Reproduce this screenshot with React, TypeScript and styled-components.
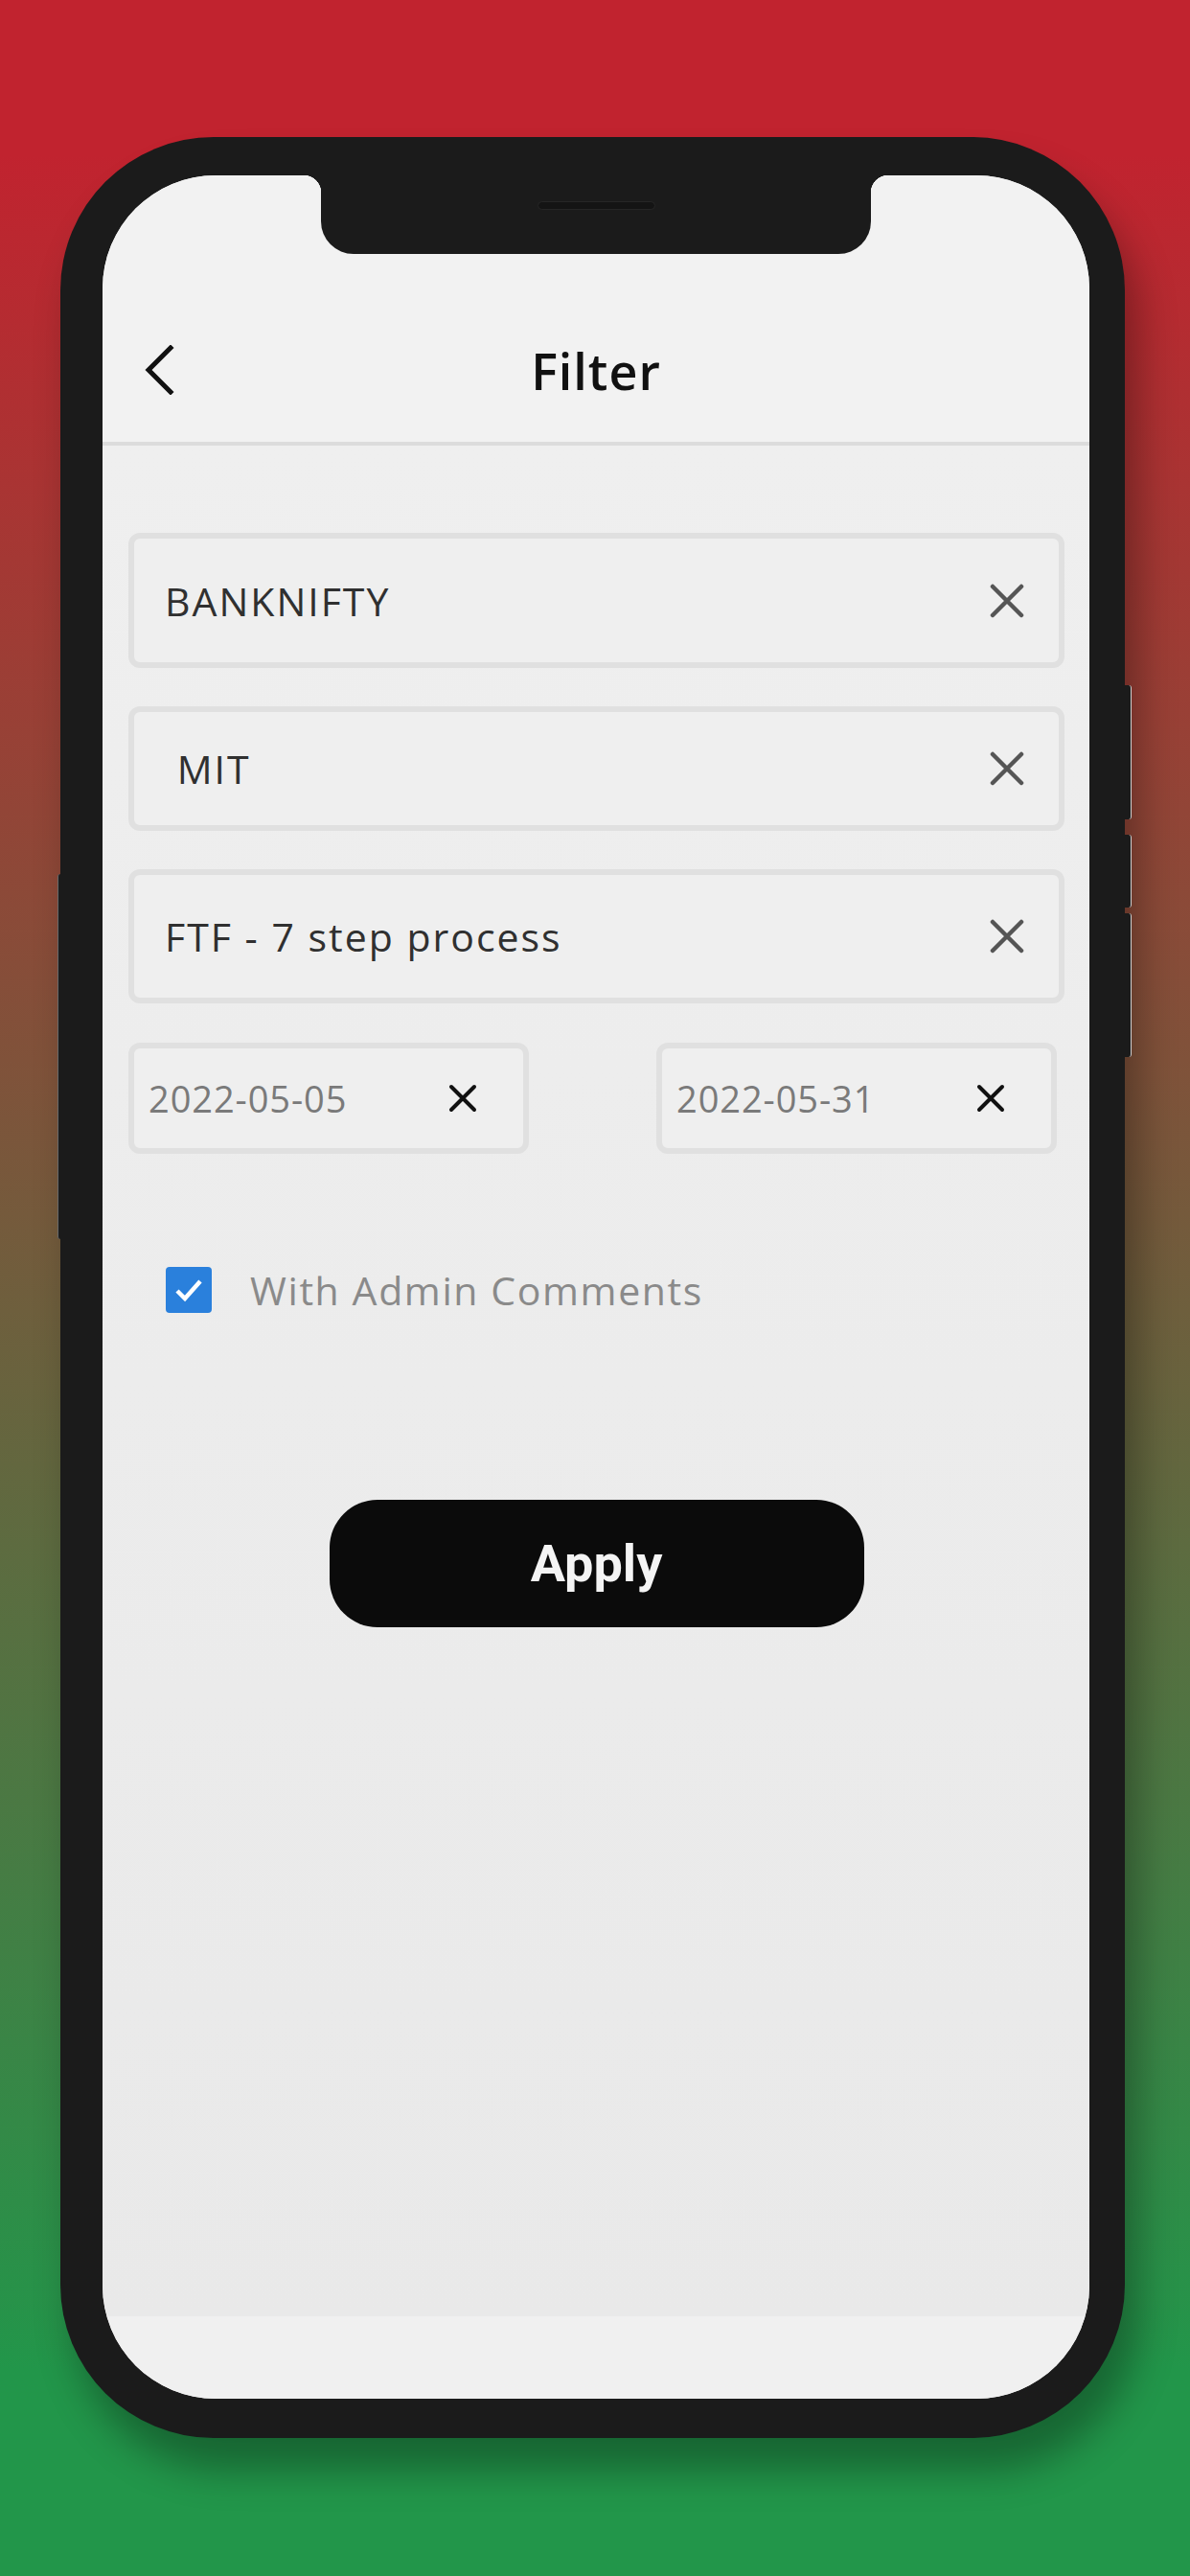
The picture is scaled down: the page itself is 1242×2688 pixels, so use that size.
import styled, { createGlobalStyle } from "styled-components";

const GlobalStyle = createGlobalStyle`
  html, body {
    margin: 0;
    padding: 0;
  }
  body {
    font-family: "Open Sans", "DejaVu Sans", sans-serif;
  }
  * {
    box-sizing: border-box;
  }
`;

const Backdrop = styled.div`
  width: 1242px;
  height: 2688px;
  padding: 143px 0 0 63px;
  background: linear-gradient(
    180deg,
    #c1232f 0%,
    #c1232f 6%,
    #22964a 92%,
    #22964a 100%
  );
`;

const Phone = styled.div`
  position: relative;
  width: 1111px;
  height: 2401px;
  padding: 40px 37px 41px 44px;
  border-radius: 160px;
  background: #1b1b1b;
  box-shadow: 14px 34px 40px rgba(0, 0, 0, 0.32);
`;

const SideKey = styled.div<{ $side: "left" | "right"; $top: number; $len: number }>`
  position: absolute;
  top: ${(p) => p.$top}px;
  height: ${(p) => p.$len}px;
  width: 8px;
  background: #1b1b1b;
  ${(p) =>
    p.$side === "right"
      ? "right: -7px; border-right: 1px solid #cfcfcf; border-radius: 0 3px 3px 0;"
      : "left: -3px; border-left: 1px solid #6a6a6a; border-radius: 3px 0 0 3px;"}
`;

const Screen = styled.div`
  width: 1030px;
  height: 2320px;
  border-radius: 118px;
  overflow: hidden;
  display: flex;
  flex-direction: column;
  background: #efefef;
`;

const Header = styled.header`
  display: flex;
  flex-direction: column;
  background: #f2f2f2;
  border-bottom: 4px solid #dcdcdc;
`;

const Notch = styled.div`
  position: relative;
  align-self: center;
  width: 574px;
  height: 82px;
  padding-top: 27px;
  display: flex;
  justify-content: center;
  background: #1b1b1b;
  border-radius: 0 0 34px 34px;

  &::before,
  &::after {
    content: "";
    position: absolute;
    top: 0;
    width: 18px;
    height: 18px;
  }
  &::before {
    left: -18px;
    background: radial-gradient(circle at 0 100%, transparent 18px, #1b1b1b 18.5px);
  }
  &::after {
    right: -18px;
    background: radial-gradient(circle at 100% 100%, transparent 18px, #1b1b1b 18.5px);
  }
`;

const Speaker = styled.div`
  width: 123px;
  height: 9px;
  border-radius: 5px;
  background: #141414;
  border: 1px solid #262626;
`;

const HeaderRow = styled.div`
  height: 196px;
  padding-top: 46px;
  display: grid;
  grid-template-columns: 1fr auto 1fr;
  align-items: center;
`;

const BackButton = styled.button`
  justify-self: start;
  display: flex;
  margin-left: 43px;
  padding: 0;
  border: none;
  background: none;
`;

const Title = styled.h1`
  margin: 0;
  font-size: 52px;
  font-weight: 600;
  color: #111;
  letter-spacing: 1px;
`;

const Content = styled.main`
  flex: 1;
  display: flex;
  flex-direction: column;
  padding: 91px 26px 0 27px;
  background: linear-gradient(180deg, #efefef 0%, #e9e9e9 100%);
`;

const FieldStack = styled.div`
  display: flex;
  flex-direction: column;
  gap: 40px;
`;

const Field = styled.div<{ $h: number }>`
  height: ${(p) => p.$h}px;
  display: flex;
  align-items: center;
  justify-content: space-between;
  padding: 0 36px 0 32px;
  border: 6px solid #e0e0e0;
  border-radius: 12px;
  background: #efefef;
`;

const FieldText = styled.span`
  font-size: 41px;
  color: #303030;
  white-space: pre;
  letter-spacing: 2px;
`;

const DateRow = styled.div`
  display: flex;
  justify-content: space-between;
  padding-right: 8px;
  margin-top: 41px;
`;

const DateBox = styled.div`
  width: 418px;
  height: 116px;
  display: flex;
  align-items: center;
  justify-content: space-between;
  padding: 0 48px 0 15px;
  border: 6px solid #e0e0e0;
  border-radius: 12px;
  background: #efefef;
`;

const DateText = styled.span`
  font-size: 38px;
  color: #7a7a7a;
  letter-spacing: 0.9px;
`;

const CheckRow = styled.label`
  height: 48px;
  display: flex;
  align-items: center;
  gap: 40px;
  margin-top: 118px;
  padding-left: 39px;
`;

const CheckBox = styled.span`
  width: 48px;
  height: 48px;
  display: flex;
  align-items: center;
  justify-content: center;
  border-radius: 4px;
  background: #2a80dc;
`;

const CheckLabel = styled.span`
  font-size: 41px;
  line-height: 1;
  color: #8a8a8a;
  letter-spacing: 1.6px;
`;

const ApplyButton = styled.button`
  align-self: center;
  margin-top: 195px;
  width: 558px;
  height: 133px;
  border: none;
  border-radius: 50px;
  background: #0b0b0b;
  color: #f4f4f4;
  font-family: Roboto, "Liberation Sans", sans-serif;
  font-weight: 700;
  font-size: 54px;
`;

const BottomBar = styled.div`
  height: 86px;
  background: #f0f0f0;
`;

function ClearIcon({ size, color, width }: { size: number; color: string; width: number }) {
  const e = size - 3;
  return (
    <svg width={size} height={size} viewBox={`0 0 ${size} ${size}`}>
      <path
        d={`M3 3 L${e} ${e} M${e} 3 L3 ${e}`}
        stroke={color}
        strokeWidth={width}
        strokeLinecap="round"
        fill="none"
      />
    </svg>
  );
}

const fields = [
  { text: "BANKNIFTY", h: 141 },
  { text: " MIT", h: 130 },
  { text: "FTF - 7 step process", h: 140 },
];

export default function App() {
  return (
    <>
      <GlobalStyle />
      <Backdrop>
        <Phone>
          <SideKey $side="right" $top={572} $len={140} />
          <SideKey $side="right" $top={728} $len={76} />
          <SideKey $side="right" $top={810} $len={150} />
          <SideKey $side="left" $top={769} $len={381} />
          <Screen>
            <Header>
              <Notch>
                <Speaker />
              </Notch>
              <HeaderRow>
                <BackButton aria-label="Back">
                  <svg width="32" height="52" viewBox="0 0 32 52">
                    <path
                      d="M28 3 L5 26 L28 49"
                      stroke="#111"
                      strokeWidth="5"
                      fill="none"
                      strokeLinecap="square"
                    />
                  </svg>
                </BackButton>
                <Title>Filter</Title>
                <span />
              </HeaderRow>
            </Header>
            <Content>
              <FieldStack>
                {fields.map((f) => (
                  <Field key={f.text} $h={f.h}>
                    <FieldText>{f.text}</FieldText>
                    <ClearIcon size={36} color="#555" width={4.5} />
                  </Field>
                ))}
              </FieldStack>
              <DateRow>
                <DateBox>
                  <DateText>2022-05-05</DateText>
                  <ClearIcon size={30} color="#111" width={4} />
                </DateBox>
                <DateBox>
                  <DateText>2022-05-31</DateText>
                  <ClearIcon size={30} color="#111" width={4} />
                </DateBox>
              </DateRow>
              <CheckRow>
                <CheckBox>
                  <svg width="34" height="34" viewBox="0 0 34 34">
                    <path
                      d="M5 18 L13 26 L29 8"
                      stroke="#fff"
                      strokeWidth="4.5"
                      fill="none"
                    />
                  </svg>
                </CheckBox>
                <CheckLabel>With Admin Comments</CheckLabel>
              </CheckRow>
              <ApplyButton>Apply</ApplyButton>
            </Content>
            <BottomBar />
          </Screen>
        </Phone>
      </Backdrop>
    </>
  );
}
